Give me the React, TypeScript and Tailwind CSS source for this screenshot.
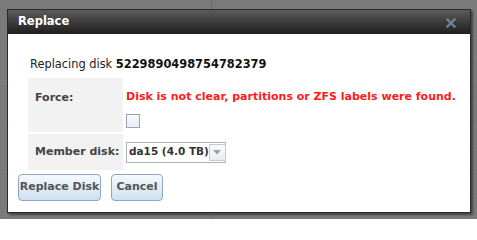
export default function App() {
  return (
    <div className="relative h-[219px] w-[477px] overflow-hidden bg-[#7a7a7a] pl-[7px] pt-[9px] font-['DejaVu_Sans',sans-serif]">
      {/* faint page lines behind the overlay */}
      <div className="pointer-events-none absolute inset-0">
        <div className="absolute left-[211px] top-0 h-[9px] w-px bg-[#6a6a6a]" />
        <div className="absolute left-[211px] top-[213px] h-[6px] w-px bg-[#6a6a6a]" />
        <div className="absolute right-0 top-[34px] h-px w-[6px] bg-[#8a7e76]" />
        <div className="absolute right-0 top-[57px] h-px w-[6px] bg-[#8a7e76]" />
        <div className="absolute right-0 top-[80px] h-px w-[6px] bg-[#8a7e76]" />
        <div className="absolute right-0 top-[103px] h-px w-[6px] bg-[#8a7e76]" />
        <div className="absolute right-0 top-[126px] h-px w-[6px] bg-[#8a7e76]" />
        <div className="absolute right-0 top-[149px] h-px w-[6px] bg-[#8a7e76]" />
        <div className="absolute right-0 top-[172px] h-px w-[6px] bg-[#8a7e76]" />
        <div className="absolute right-0 top-[195px] h-px w-[6px] bg-[#8a7e76]" />
        <div className="absolute left-0 top-[34px] h-px w-[7px] bg-[#8a7e76]" />
        <div className="absolute left-0 top-[80px] h-px w-[7px] bg-[#8a7e76]" />
        <div className="absolute left-0 top-[126px] h-px w-[7px] bg-[#8a7e76]" />
        <div className="absolute left-0 top-[172px] h-px w-[7px] bg-[#8a7e76]" />
      </div>

      {/* Dialog */}
      <div className="relative flex h-[204px] w-[464px] flex-col border border-[#2a2a2a] bg-white shadow-[2px_2px_2px_rgba(0,0,0,0.45)]">
        {/* Title bar */}
        <div className="flex h-[24px] items-center justify-between bg-gradient-to-b from-[#5c5c5c] to-[#1f1f1f] pl-[10px] pr-[14px]">
          <span className="text-[11.5px] font-bold text-white">Replace</span>
          <svg width="10" height="10" viewBox="0 0 10 10" className="mt-px">
            <path d="M1.5 1.5 L8.5 8.5 M8.5 1.5 L1.5 8.5" stroke="#6f8196" strokeWidth="2.4" strokeLinecap="square" />
          </svg>
        </div>

        {/* Body */}
        <div className="flex flex-col pl-[20px] pt-[23px]">
          <p className="pl-[2px] text-[11.4px] leading-[14px] text-[#222]">
            Replacing disk <span className="font-bold text-[#111]">5229890498754782379</span>
          </p>

          <div className="mt-[7px] flex flex-col gap-[2px]">
            {/* Force row */}
            <div className="flex gap-px">
              <div className="h-[54px] w-[95px] bg-[#f2f2f2] pl-[7px] pt-[12px] text-[11px] font-bold text-[#444]">
                Force:
              </div>
              <div className="flex flex-col pl-[2px] pt-[12px]">
                <span className="text-[11px] font-bold leading-[14px] text-[#ff1a1a]">
                  Disk is not clear, partitions or ZFS labels were found.
                </span>
                <div className="mt-[10px] h-[14px] w-[14px] border border-[#9aa3b3] bg-gradient-to-b from-[#fafafa] to-[#e9edf3]" />
              </div>
            </div>

            {/* Member disk row */}
            <div className="flex gap-px">
              <div className="flex h-[36px] w-[95px] items-center bg-[#f2f2f2] pl-[7px] text-[11px] font-bold text-[#444]">
                Member disk:
              </div>
              <div className="flex items-center pl-[2px]">
                <div className="flex h-[21px] w-[100px] items-center border border-[#a9b4c4] bg-white">
                  <span className="flex-1 whitespace-nowrap pl-[2px] text-[10.5px] font-bold text-[#333]">da15 (4.0 TB)</span>
                  <div className="mr-px flex h-[17px] w-[17px] shrink-0 items-center justify-center border border-[#c4ccd6] bg-gradient-to-b from-[#fbfbfb] to-[#e8ecf0]">
                    <svg width="8" height="5" viewBox="0 0 8 5">
                      <path d="M0 0 L8 0 L4 4.5 Z" fill="#8ea3bd" />
                    </svg>
                  </div>
                </div>
              </div>
            </div>
          </div>
        </div>

        {/* Buttons */}
        <div className="mt-[4px] flex gap-[10px] pl-[10px]">
          <button className="h-[27px] w-[83px] rounded-[4px] border border-[#8ea6c0] bg-gradient-to-b from-[#f6f9fc] to-[#cfe0f1] text-[11px] font-bold text-[#555]">
            Replace Disk
          </button>
          <button className="h-[27px] w-[52px] rounded-[4px] border border-[#8ea6c0] bg-gradient-to-b from-[#f6f9fc] to-[#cfe0f1] text-[11px] font-bold text-[#555]">
            Cancel
          </button>
        </div>
      </div>
    </div>
  )
}
